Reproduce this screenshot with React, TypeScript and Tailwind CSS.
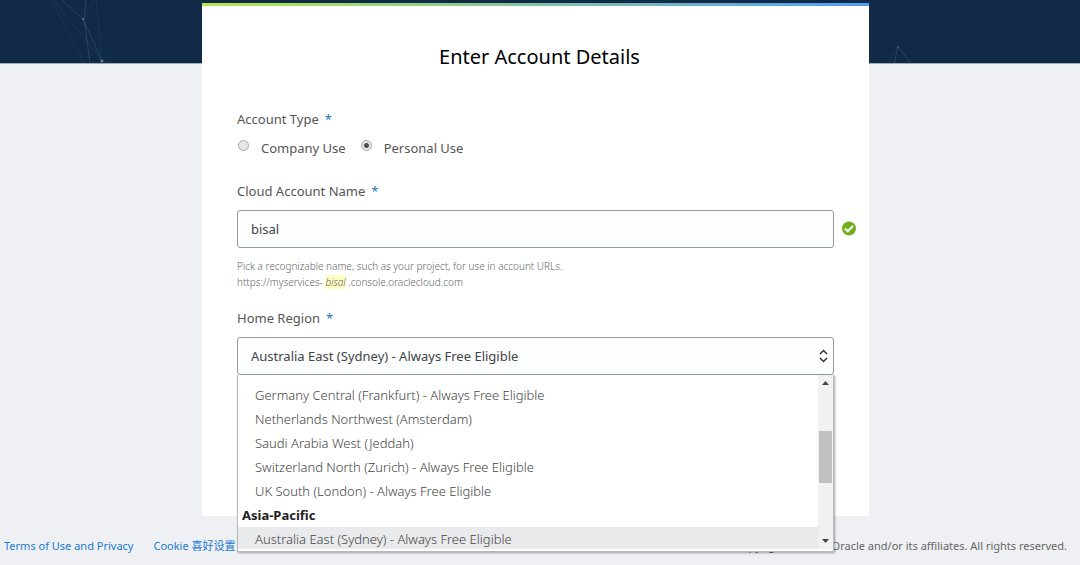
import { useState } from "react";

interface Region {
  name: string;
  group?: boolean;
}

const SELECTED_REGION = "Australia East (Sydney) - Always Free Eligible";

const regions: Region[] = [
  { name: "Germany Central (Frankfurt) - Always Free Eligible" },
  { name: "Netherlands Northwest (Amsterdam)" },
  { name: "Saudi Arabia West (Jeddah)" },
  { name: "Switzerland North (Zurich) - Always Free Eligible" },
  { name: "UK South (London) - Always Free Eligible" },
  { name: "Asia-Pacific", group: true },
  { name: SELECTED_REGION },
];

function Required() {
  return <span className="ml-1.5 text-[#1b75bb]">*</span>;
}

function Banner() {
  return (
    <header className="flex h-16 justify-between overflow-hidden border-b border-[#9fabb9] bg-[#102a47]">
      <svg width="202" height="63" fill="none" stroke="#5f7d9c" aria-hidden="true">
        <path d="M62 0 83 19 102 61M86 0 84 19 90 63" strokeOpacity=".32" />
        <path d="M52 0 84 63M54 0 102 61M93 0 84 19M96 0 102 61 111 63" strokeOpacity=".15" />
        <circle cx="83" cy="19" r="1" fill="#5f7d9c" stroke="none" />
        <circle cx="102" cy="61" r="1.5" fill="#5f7d9c" stroke="none" />
      </svg>
      <svg width="211" height="63" fill="none" stroke="#5f7d9c" aria-hidden="true">
        <path d="M25 63 29 47 42 63" strokeOpacity=".32" />
        <path d="M18 63 29 47" strokeOpacity=".15" />
        <circle cx="29" cy="47" r="1" fill="#3f5d7c" stroke="none" />
      </svg>
    </header>
  );
}

function TypeRadio({
  label,
  checked,
  onChange,
}: {
  label: string;
  checked: boolean;
  onChange: () => void;
}) {
  return (
    <label className="flex items-start">
      <input
        type="radio"
        name="accountType"
        checked={checked}
        onChange={onChange}
        className="mt-0.5 mr-3 ml-px size-[11px] appearance-none rounded-full border border-[#a8a8a8] bg-[#e6e6e6] checked:bg-[radial-gradient(circle,#505050_0_2px,#e6e6e6_3px)]"
      />
      <span>{label}</span>
    </label>
  );
}

function RegionList() {
  return (
    <div className="absolute inset-x-0 top-full flex h-[177px] border border-t-0 border-[#b5bac0] bg-white pb-0.5 shadow-[1px_1px_2px_rgba(0,0,0,0.35)]">
      <ul
        role="listbox"
        aria-label="Regions"
        className="flex-1 overflow-hidden pt-2 font-light text-[#444]"
      >
        {regions.map((r) =>
          r.group ? (
            <li key={r.name} role="presentation" className="pl-1 leading-6 font-bold text-[#222]">
              {r.name}
            </li>
          ) : (
            <li
              key={r.name}
              role="option"
              aria-selected={r.name === SELECTED_REGION}
              className="pl-[17px] leading-6 aria-selected:bg-[#e9eaec]"
            >
              {r.name}
            </li>
          ),
        )}
      </ul>
      <div className="flex w-[15px] flex-col items-center bg-[#f1f1f1] py-1.5">
        <svg width="7" height="4" fill="#444" aria-hidden="true">
          <path d="M0 4 3.5 0 7 4z" />
        </svg>
        <div className="mt-[46px] h-[52px] w-[13px] bg-[#c1c1c1]" />
        <svg className="mt-auto" width="7" height="4" fill="#444" aria-hidden="true">
          <path d="M0 0 3.5 4 7 0z" />
        </svg>
      </div>
    </div>
  );
}

export default function App() {
  const [type, setType] = useState("personal");
  const [name, setName] = useState("bisal");

  return (
    <div className="min-h-screen bg-[#eff0f4] font-['Noto_Sans','Noto_Sans_CJK_SC',sans-serif] text-[13px] leading-5 text-[#555]">
      <Banner />

      <main className="relative -mt-[61px] pr-[9px]">
        <form className="mx-auto w-full max-w-[667px] bg-white pb-[141px]">
          <div className="h-[3px] bg-linear-to-r/srgb from-[#b4e84a] to-[#559cf8]" />
          <h1 className="pt-[35px] pl-2 text-center text-[20px] leading-8 text-black">
            Enter Account Details
          </h1>

          <div className="px-[35px] pt-9">
            <fieldset>
              <legend>
                Account Type
                <Required />
              </legend>
              <div className="mt-[9px] flex gap-3.5">
                <TypeRadio
                  label="Company Use"
                  checked={type === "company"}
                  onChange={() => setType("company")}
                />
                <TypeRadio
                  label="Personal Use"
                  checked={type === "personal"}
                  onChange={() => setType("personal")}
                />
              </div>
            </fieldset>

            <label htmlFor="accountName" className="mt-[23px] block">
              Cloud Account Name
              <Required />
            </label>
            <div className="-mr-[23px] mt-[9px] flex items-center gap-[7px]">
              <input
                id="accountName"
                value={name}
                onChange={(e) => setName(e.target.value)}
                className="h-[38px] min-w-0 flex-1 rounded-[3px] border border-[#999] bg-[#fbfdff] px-[13px] text-[#444]"
              />
              <svg width="16" height="16" viewBox="0 0 16 16" aria-label="Valid">
                <circle cx="8" cy="7.5" r="7" fill="#71b01c" />
                <path d="m4 7.5 2.8 2.8 5.2-5.4" fill="none" stroke="#fff" strokeWidth="2" />
              </svg>
            </div>

            <div className="mt-2.5 text-[10px] leading-4 font-light text-[#666]">
              <p>Pick a recognizable name, such as your project, for use in account URLs.</p>
              <p>
                https://myservices- <em className="bg-[#ffffc4]">{name}</em> .console.oraclecloud.com
              </p>
            </div>

            <label htmlFor="region" className="mt-[18px] block">
              Home Region
              <Required />
            </label>
            <div className="relative mt-[9px]">
              <select
                id="region"
                defaultValue={SELECTED_REGION}
                className="block h-[38px] w-full appearance-none rounded-[3px] border border-[#999] bg-[#fbfdff] px-[13px] text-[#444]"
              >
                {regions
                  .filter((r) => !r.group)
                  .map((r) => (
                    <option key={r.name}>{r.name}</option>
                  ))}
              </select>
              <svg
                className="pointer-events-none absolute top-3 right-1.5"
                width="9"
                height="14"
                fill="none"
                stroke="#333"
                strokeWidth="1.5"
                aria-hidden="true"
              >
                <path d="M1 5 4.5 1.5 8 5M1 9l3.5 3.5L8 9" />
              </svg>
              <RegionList />
            </div>
          </div>
        </form>
      </main>

      <footer className="flex justify-between pt-5 pr-[13px] pl-1 text-[11px]">
        <nav className="flex gap-5 text-[#1a7bd0]">
          <a href="#terms">Terms of Use and Privacy</a>
          <a href="#cookies">Cookie 喜好设置</a>
        </nav>
        <p className="text-[#666]">
          Copyright © 2020, Oracle and/or its affiliates. All rights reserved.
        </p>
      </footer>
    </div>
  );
}
